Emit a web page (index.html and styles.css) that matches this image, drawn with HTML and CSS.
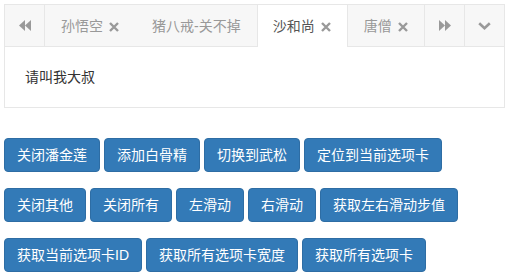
FILE: index.html
```html
<!DOCTYPE html>
<html lang="zh-CN">
<head>
<meta charset="utf-8">
<title>Tabs</title>
<link rel="stylesheet" href="styles.css">
</head>
<body>
<div class="tabs">
  <div class="tabbar">
    <button class="nav nav-left" type="button" aria-label="向左">
      <svg width="12" height="11" viewBox="0 0 12 11"><polygon points="6,0 0,5.5 6,11"/><polygon points="12,0 6,5.5 12,11"/></svg>
    </button>
    <ul class="tablist">
      <li class="tab">孙悟空<span class="close"><svg width="10" height="10" viewBox="0 0 10 10"><path d="M1 1 L9 9 M9 1 L1 9"/></svg></span></li>
      <li class="tab">猪八戒-关不掉</li>
      <li class="tab active">沙和尚<span class="close"><svg width="10" height="10" viewBox="0 0 10 10"><path d="M1 1 L9 9 M9 1 L1 9"/></svg></span></li>
      <li class="tab">唐僧<span class="close"><svg width="10" height="10" viewBox="0 0 10 10"><path d="M1 1 L9 9 M9 1 L1 9"/></svg></span></li>
    </ul>
    <button class="nav nav-right" type="button" aria-label="向右">
      <svg width="12" height="11" viewBox="0 0 12 11"><polygon points="0,0 6,5.5 0,11"/><polygon points="6,0 12,5.5 6,11"/></svg>
    </button>
    <button class="nav nav-drop" type="button" aria-label="更多">
      <svg width="13" height="8" viewBox="0 0 13 8"><polyline points="1.2,1.2 6.5,6.2 11.8,1.2"/></svg>
    </button>
  </div>
  <div class="content">请叫我大叔</div>
</div>

<div class="actions">
  <div class="row">
    <button class="btn" type="button">关闭潘金莲</button>
    <button class="btn" type="button">添加白骨精</button>
    <button class="btn" type="button">切换到武松</button>
    <button class="btn" type="button">定位到当前选项卡</button>
  </div>
  <div class="row">
    <button class="btn" type="button">关闭其他</button>
    <button class="btn" type="button">关闭所有</button>
    <button class="btn" type="button">左滑动</button>
    <button class="btn" type="button">右滑动</button>
    <button class="btn" type="button">获取左右滑动步值</button>
  </div>
  <div class="row">
    <button class="btn" type="button">获取当前选项卡ID</button>
    <button class="btn" type="button">获取所有选项卡宽度</button>
    <button class="btn" type="button">获取所有选项卡</button>
  </div>
</div>
</body>
</html>
```

FILE: styles.css
```css
html, body {
  margin: 0;
  padding: 0;
  background: #fff;
}
body {
  padding: 4px 5px 0 4px;
  font-family: "Liberation Sans", "Noto Sans CJK SC", sans-serif;
  font-size: 14px;
  line-height: 20px;
  color: #333;
}
.tabs {
  border: 1px solid #e7e7e7;
}
.tabbar {
  display: flex;
  height: 41px;
  background: #f7f7f7;
  border-bottom: 1px solid #e7e7e7;
}
.nav {
  flex: 0 0 40px;
  width: 40px;
  height: 41px;
  margin: 0;
  padding: 0;
  border: 0;
  background: transparent;
  display: flex;
  align-items: center;
  justify-content: center;
}
.nav-left { border-right: 1px solid #e7e7e7; }
.nav-right, .nav-drop { border-left: 1px solid #e7e7e7; }
.nav svg { fill: #999; }
.nav-drop svg { fill: none; stroke: #999; stroke-width: 2.6; margin-top: 1px; }
.tablist {
  flex: 1 1 auto;
  display: flex;
  margin: 0;
  padding: 0;
  list-style: none;
  min-width: 0;
}
.tab {
  position: relative;
  display: flex;
  align-items: center;
  height: 42px;
  margin-bottom: -1px;
  padding: 0 15px;
  border-left: 1px solid transparent;
  border-right: 1px solid transparent;
  color: #999;
  white-space: nowrap;
}
.tab.active {
  background: #fff;
  color: #555;
  border-left-color: #e7e7e7;
  border-right-color: #e7e7e7;
}
.close {
  display: inline-flex;
  width: 11px;
  height: 10px;
  margin-left: 6px;
  margin-top: 1px;
}
.close svg {
  stroke: #999;
  stroke-width: 2.4;
  fill: none;
}
.content {
  padding: 20px;
  color: #333;
}
.actions {
  margin-top: 30px;
}
.row {
  display: flex;
  gap: 4px;
  margin-bottom: 16px;
}
.btn {
  margin: 0;
  padding: 6px 12px;
  font-family: inherit;
  font-size: 14px;
  line-height: 20px;
  color: #fff;
  background: #337ab7;
  border: 1px solid #2e6da4;
  border-radius: 4px;
  white-space: nowrap;
}
```
